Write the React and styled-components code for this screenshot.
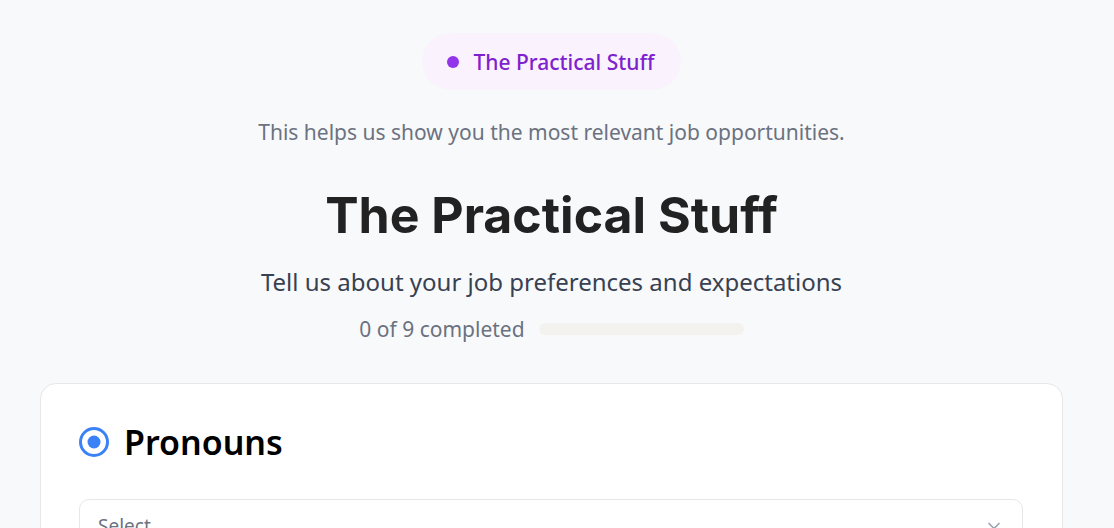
import React from "react";
import styled, { createGlobalStyle } from "styled-components";

const Global = createGlobalStyle`
  html, body { margin: 0; padding: 0; background: #f8f9fb; }
  body { font-family: "Noto Sans", "Open Sans", sans-serif; overflow: hidden; }
`;

const Page = styled.div`
  padding: 33px 51px 40px 40px;
  display: flex;
  flex-direction: column;
  align-items: center;
`;

const Badge = styled.div`
  display: inline-flex;
  align-items: center;
  gap: 15px;
  height: 57px;
  padding: 0 27px 0 25px;
  border-radius: 999px;
  background: #faf3fe;
  color: #7e22ce;
  font-size: 21px;
  font-weight: 500;
`;

const Dot = styled.span`
  width: 12px;
  height: 12px;
  border-radius: 50%;
  background: #9333ea;
`;

const Sub = styled.p`
  margin: 28px 0 0;
  font-size: 21px;
  line-height: 28px;
  color: #6b7280;
`;

const Heading = styled.h1`
  margin: 39px 0 0;
  font-family: Inter, sans-serif;
  font-size: 50px;
  font-weight: 700;
  line-height: 60px;
  color: #222222;
`;

const Lead = styled.p`
  margin: 21px 0 0;
  font-size: 24px;
  line-height: 32px;
  color: #374151;
`;

const ProgressRow = styled.div`
  display: flex;
  align-items: center;
  gap: 14px;
  margin-top: 17px;
  font-size: 21px;
  line-height: 28px;
  color: #6b7280;
`;

const Track = styled.div`
  width: 205px;
  height: 12px;
  border-radius: 999px;
  background: #f3f2ef;
`;

const Card = styled.section`
  align-self: stretch;
  margin-top: 40px;
  background: #ffffff;
  border: 1px solid #e5e7eb;
  border-radius: 16px;
  padding: 35px 39px 40px 38px;
`;

const TitleRow = styled.div`
  display: flex;
  align-items: center;
  gap: 15px;
`;

const Title = styled.h2`
  margin: 0;
  font-size: 34px;
  line-height: 46px;
  font-weight: 600;
  color: #000;
`;

const Select = styled.div`
  margin-top: 34px;
  height: 52px;
  border: 1px solid #e5e7eb;
  border-radius: 10px;
  display: flex;
  align-items: center;
  justify-content: space-between;
  padding: 0 18px;
  font-size: 19px;
  color: #6b7280;
`;

export default function App() {
  return (
    <>
      <Global />
      <Page>
        <Badge>
          <Dot />
          The Practical Stuff
        </Badge>
        <Sub>This helps us show you the most relevant job opportunities.</Sub>
        <Heading>The Practical Stuff</Heading>
        <Lead>Tell us about your job preferences and expectations</Lead>
        <ProgressRow>
          <span>0 of 9 completed</span>
          <Track />
        </ProgressRow>
        <Card>
          <TitleRow>
            <svg width="30" height="30" viewBox="0 0 30 30">
              <circle cx="15" cy="15" r="13.5" fill="none" stroke="#3b82f6" strokeWidth="3" />
              <circle cx="15" cy="15" r="6.5" fill="#3b82f6" />
            </svg>
            <Title>Pronouns</Title>
          </TitleRow>
          <Select>
            <span>Select...</span>
            <svg width="20" height="20" viewBox="0 0 24 24" fill="none" stroke="#9ca3af" strokeWidth="2" strokeLinecap="round" strokeLinejoin="round">
              <path d="m6 9 6 6 6-6" />
            </svg>
          </Select>
        </Card>
      </Page>
    </>
  );
}
